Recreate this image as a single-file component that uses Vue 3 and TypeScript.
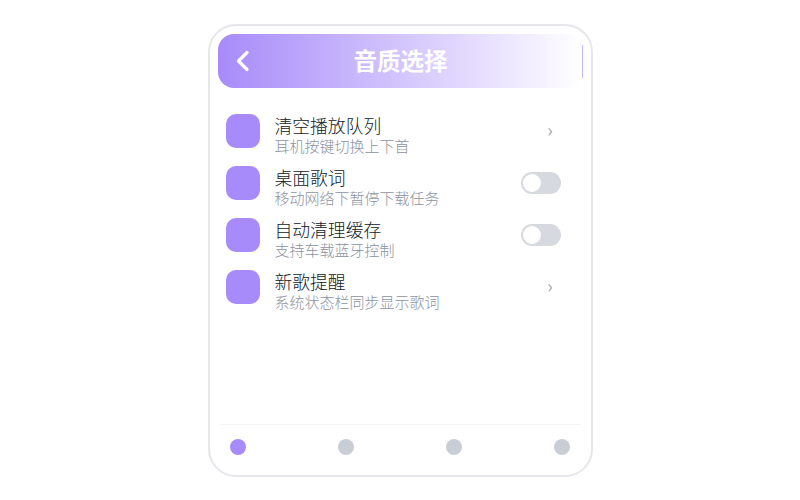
<script setup lang="ts">
interface Row { title: string; sub: string; kind: 'arrow' | 'toggle' }
const rows: Row[] = [
  { title: '清空播放队列', sub: '耳机按键切换上下首', kind: 'arrow' },
  { title: '桌面歌词', sub: '移动网络下暂停下载任务', kind: 'toggle' },
  { title: '自动清理缓存', sub: '支持车载蓝牙控制', kind: 'toggle' },
  { title: '新歌提醒', sub: '系统状态栏同步显示歌词', kind: 'arrow' },
]
const dots = [true, false, false, false]
</script>

<template>
  <div class="page">
    <div class="phone">
      <header class="head">
        <svg class="back" width="14" height="22" viewBox="0 0 14 22">
          <path d="M11 2.5 L2.5 11 L11 19.5" fill="none" stroke="#fff" stroke-width="3.2" stroke-linecap="round" stroke-linejoin="round" />
        </svg>
        <div class="title">音质选择</div>
        <div class="edge"></div>
      </header>
      <div class="list">
        <div v-for="r in rows" :key="r.title" class="row">
          <div class="icon"></div>
          <div class="text">
            <div class="t">{{ r.title }}</div>
            <div class="s">{{ r.sub }}</div>
          </div>
          <div v-if="r.kind === 'toggle'" class="toggle"><span class="knob"></span></div>
          <div v-else class="chev">›</div>
        </div>
      </div>
      <nav class="nav">
        <span v-for="(d, i) in dots" :key="i" class="dot" :class="{ on: d }"></span>
      </nav>
    </div>
  </div>
</template>

<style>
html, body { margin: 0; background: #fff; }
</style>

<style scoped>
.page {
  width: 800px;
  height: 500px;
  box-sizing: border-box;
  padding: 24px 0 0 208px;
  font-family: "Noto Sans CJK SC", "Noto Sans", sans-serif;
}
.phone {
  width: 385px;
  height: 453px;
  box-sizing: border-box;
  border: 2px solid #e5e7eb;
  border-radius: 28px;
  background: #fff;
  padding: 8px;
  display: flex;
  flex-direction: column;
}
.head {
  height: 54px;
  flex: none;
  border-radius: 16px;
  background: linear-gradient(90deg, #a78bfa, #ffffff);
  display: flex;
  align-items: center;
  justify-content: center;
  position: relative;
}
.back { position: absolute; left: 18px; top: 16px; }
.title { color: #fff; font-size: 23.5px; font-weight: 700; line-height: 52px; padding-bottom: 2px; }
.edge {
  position: absolute;
  right: 0;
  top: 11px;
  width: 1px;
  height: 33px;
  background: #c4b5fd;
}
.list {
  flex: 1;
  padding: 26px 0 0 8px;
  display: flex;
  flex-direction: column;
}
.row {
  height: 34px;
  margin-bottom: 18px;
  display: flex;
  align-items: center;
}
.icon {
  width: 34px;
  height: 34px;
  border-radius: 10px;
  background: #a78bfa;
  flex: none;
}
.text { margin-left: 14.5px; flex: 1; padding-top: 7px; }
.t { font-size: 17.8px; line-height: 21px; font-weight: 300; color: #111827; }
.s { font-size: 15px; line-height: 19px; font-weight: 300; color: #8b93a1; }
.toggle {
  width: 40px;
  height: 22px;
  box-sizing: border-box;
  border-radius: 11px;
  background: #d6d9e0;
  padding: 2px;
  margin-right: 22px;
}
.knob { display: block; width: 18px; height: 18px; border-radius: 50%; background: #fff; }
.chev {
  width: 10px;
  margin: -4px 28px 0 0;
  text-align: center;
  font-size: 18px;
  line-height: 22px;
  color: #9ca3af;
}
.nav {
  flex: none;
  height: 43px;
  box-sizing: border-box;
  margin: 0 2px;
  padding: 14px 10.5px 0 10px;
  border-top: 1px solid #f3f4f6;
  display: flex;
  align-items: flex-start;
  justify-content: space-between;
}
.dot { width: 16px; height: 16px; border-radius: 50%; background: #c9ced6; }
.dot.on { background: #a78bfa; }
</style>
